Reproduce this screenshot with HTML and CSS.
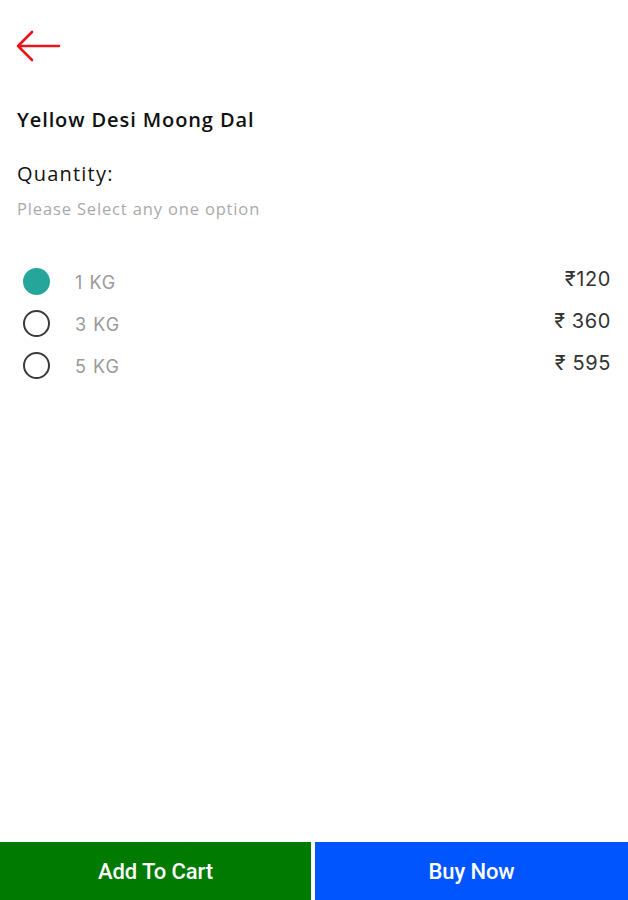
FILE: index.html
```html
<!DOCTYPE html>
<html>
<head>
<meta charset="utf-8">
<link rel="stylesheet" href="styles.css">
</head>
<body>
<div class="page">
  <header class="top">
    <svg class="back" width="46" height="34" viewBox="0 0 46 34">
      <path d="M44 16 H3 M17 2 L3 16 L17 30" fill="none" stroke="#e8141c" stroke-width="2.6" stroke-linecap="round" stroke-linejoin="round"/>
    </svg>
  </header>
  <main class="content">
    <h1 class="title">Yellow Desi Moong Dal</h1>
    <h2 class="qty">Quantity:</h2>
    <p class="hint">Please Select any one option</p>
    <ul class="options">
      <li class="option">
        <span class="radio checked"></span>
        <span class="label">1 KG</span>
        <span class="price">₹120</span>
      </li>
      <li class="option">
        <span class="radio"></span>
        <span class="label">3 KG</span>
        <span class="price">₹ 360</span>
      </li>
      <li class="option">
        <span class="radio"></span>
        <span class="label">5 KG</span>
        <span class="price">₹ 595</span>
      </li>
    </ul>
  </main>
  <footer class="actions">
    <button class="btn cart">Add To Cart</button>
    <button class="btn buy">Buy Now</button>
  </footer>
</div>
</body>
</html>
```
FILE: styles.css
```css
* { box-sizing: border-box; }
html, body { margin: 0; padding: 0; background: #fff; }
body { font-family: "Open Sans", "Liberation Sans", sans-serif; }
.page {
  width: 628px;
  height: 900px;
  display: flex;
  flex-direction: column;
}
.top {
  padding: 30px 0 0 15px;
  height: 106px;
}
.back { display: block; }
.content {
  flex: 1;
  padding: 0 17px;
}
.title {
  margin: 0;
  font-size: 20px;
  font-weight: 600;
  color: #111;
  line-height: 28px;
  letter-spacing: 0.9px;
}
.qty {
  margin: 26px 0 0;
  font-size: 20px;
  font-weight: 500;
  color: #111;
  line-height: 28px;
  letter-spacing: 1.2px;
}
.hint {
  margin: 10px 0 0;
  font-size: 16.5px;
  color: #aaa;
  line-height: 22px;
  letter-spacing: 0.85px;
}
.options {
  list-style: none;
  margin: 48px 0 0;
  padding: 0;
  display: flex;
  flex-direction: column;
  gap: 15px;
}
.option {
  display: flex;
  align-items: center;
  height: 27px;
}
.radio {
  width: 27px;
  height: 27px;
  border-radius: 50%;
  border: 2.5px solid #3a3a3a;
  margin-left: 6px;
  flex: none;
}
.radio.checked {
  border: none;
  background: #26a69a;
}
.label {
  margin-left: 25px;
  margin-top: 2px;
  font-family: "Inter", "Liberation Sans", sans-serif;
  font-size: 18px;
  letter-spacing: 1px;
  color: #9a9a9a;
}
.price {
  margin-left: auto;
  margin-top: -6px;
  font-family: "Inter", "Liberation Sans", sans-serif;
  font-size: 20px;
  letter-spacing: 0.6px;
  color: #333;
}
.actions {
  display: flex;
  gap: 4px;
  height: 58px;
}
.btn {
  border: none;
  margin: 0;
  color: #fff;
  font-family: "Roboto", "Liberation Sans", sans-serif;
  font-size: 22px;
  font-weight: 500;
  padding: 0;
  letter-spacing: -0.1px;
}
.cart { width: 311px; background: #007a00; }
.buy { flex: 1; background: #0055ff; }
```
